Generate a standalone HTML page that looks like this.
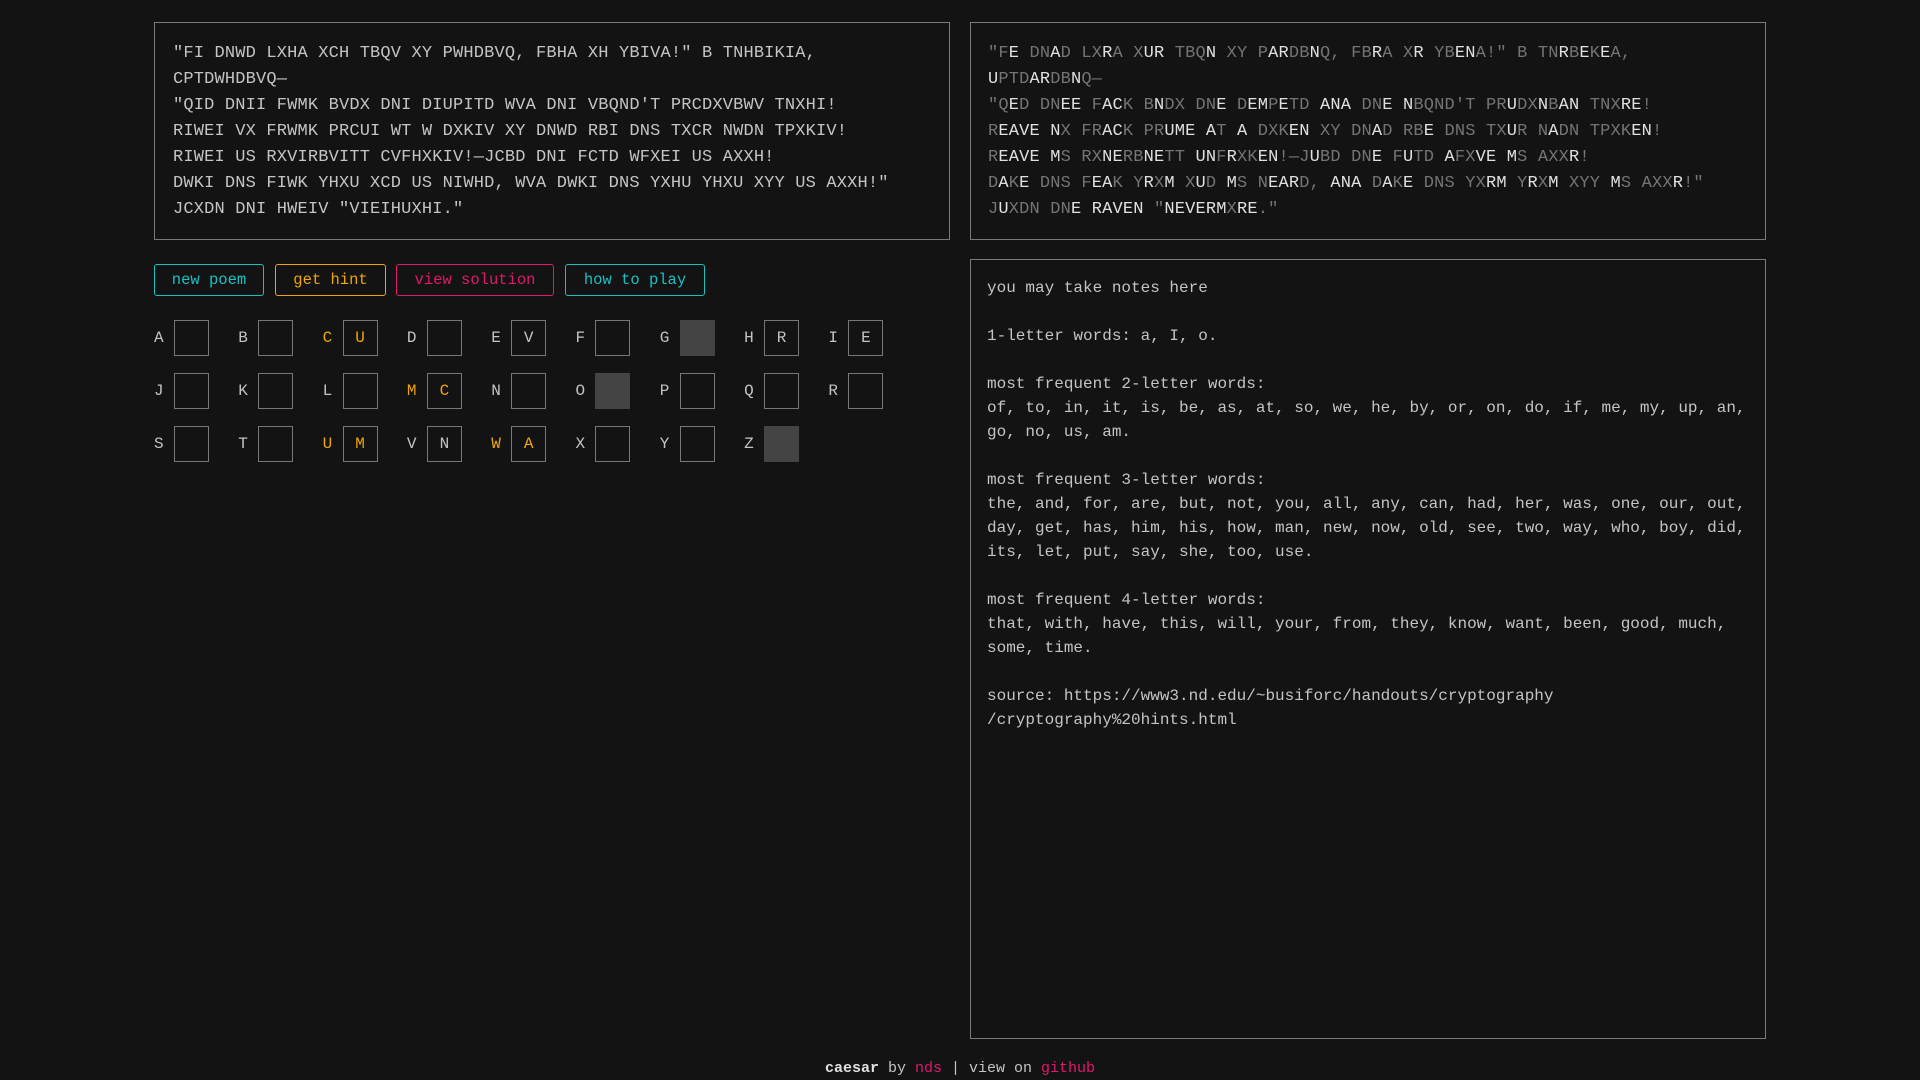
<!DOCTYPE html>
<html><head><meta charset="utf-8">
<style>
*{box-sizing:border-box;margin:0;padding:0}
body{width:1920px;height:1080px;background:#131313;color:#c4c4c4;font-family:"Liberation Mono",monospace;position:relative;overflow:hidden}
.box{position:absolute;border:1px solid #7a7a7a}
.poem{font-size:17px;line-height:26px;padding:18px 18px;white-space:pre;letter-spacing:0.17px}
#left{left:154px;top:22px;width:796px;height:218px}
#right{left:970px;top:22px;width:796px;height:218px;color:#747474;padding-left:17px}
#right b{font-weight:normal;color:#e0e0e0}
#notes{left:970px;top:259px;width:796px;height:780px;font-size:16px;line-height:24px;padding:16px 16px;white-space:pre-wrap;color:#c4c4c4}
.btn{position:absolute;top:264px;height:32px;border:1px solid;border-radius:3px;font-size:15.5px;line-height:30px;text-align:center}
.grid{position:absolute;left:154px;top:320px}
.row{display:flex;height:36px;margin-bottom:17px}
.cell{width:84.3px;display:flex;align-items:center;font-size:16px}
.cell span{width:20px}
.cell i{font-style:normal;width:35px;height:36px;border:1px solid #777;display:flex;align-items:center;justify-content:center}
.cell i.f{background:#444;border-color:#444}
.o{color:#f0a500}
#foot{position:absolute;top:1060px;width:100%;text-align:center;font-size:15px;color:#c4c4c4}
.pk{color:#e0186c}
</style></head><body>
<div class="box poem" id="left">"FI DNWD LXHA XCH TBQV XY PWHDBVQ, FBHA XH YBIVA!" B TNHBIKIA,
CPTDWHDBVQ—
"QID DNII FWMK BVDX DNI DIUPITD WVA DNI VBQND'T PRCDXVBWV TNXHI!
RIWEI VX FRWMK PRCUI WT W DXKIV XY DNWD RBI DNS TXCR NWDN TPXKIV!
RIWEI US RXVIRBVITT CVFHXKIV!—JCBD DNI FCTD WFXEI US AXXH!
DWKI DNS FIWK YHXU XCD US NIWHD, WVA DWKI DNS YXHU YHXU XYY US AXXH!"
JCXDN DNI HWEIV "VIEIHUXHI."</div>
<div class="box poem" id="right">"F<b>E</b> DN<b>A</b>D LX<b>R</b>A X<b>UR</b> TBQ<b>N</b> XY P<b>AR</b>DB<b>N</b>Q, FB<b>R</b>A X<b>R</b> YB<b>EN</b>A!" B TN<b>R</b>B<b>E</b>K<b>E</b>A,
<b>U</b>PTD<b>AR</b>DB<b>N</b>Q—
"Q<b>E</b>D DN<b>EE</b> F<b>AC</b>K B<b>N</b>DX DN<b>E</b> D<b>EM</b>P<b>E</b>TD <b>ANA</b> DN<b>E</b> <b>N</b>BQND'T PR<b>U</b>DX<b>N</b>B<b>AN</b> TNX<b>RE</b>!
R<b>EAVE</b> <b>N</b>X FR<b>AC</b>K PR<b>UME</b> <b>A</b>T <b>A</b> DXK<b>EN</b> XY DN<b>A</b>D RB<b>E</b> DNS TX<b>U</b>R N<b>A</b>DN TPXK<b>EN</b>!
R<b>EAVE</b> <b>M</b>S RX<b>NE</b>RB<b>NE</b>TT <b>UN</b>F<b>R</b>XK<b>EN</b>!—J<b>U</b>BD DN<b>E</b> F<b>U</b>TD <b>A</b>FX<b>VE</b> <b>M</b>S AXX<b>R</b>!
D<b>A</b>K<b>E</b> DNS F<b>EA</b>K Y<b>R</b>X<b>M</b> X<b>U</b>D <b>M</b>S N<b>EAR</b>D, <b>ANA</b> D<b>A</b>K<b>E</b> DNS YX<b>RM</b> Y<b>R</b>X<b>M</b> XYY <b>M</b>S AXX<b>R</b>!"
J<b>U</b>XDN DN<b>E</b> <b>RAVEN</b> "<b>NEVERM</b>X<b>RE</b>."</div>
<div class="btn" style="left:154px;width:110px;color:#18c0c4;border-color:#18c0c4">new poem</div>
<div class="btn" style="left:275px;width:111px;color:#f0a500;border-color:#f0a500">get hint</div>
<div class="btn" style="left:396px;width:158px;color:#e0186c;border-color:#e0186c">view solution</div>
<div class="btn" style="left:565px;width:140px;color:#18c0c4;border-color:#18c0c4">how to play</div>
<div class="grid">
<div class="row">
<div class="cell"><span>A</span><i></i></div>
<div class="cell"><span>B</span><i></i></div>
<div class="cell"><span class="o">C</span><i class="o">U</i></div>
<div class="cell"><span>D</span><i></i></div>
<div class="cell"><span>E</span><i>V</i></div>
<div class="cell"><span>F</span><i></i></div>
<div class="cell"><span>G</span><i class="f"></i></div>
<div class="cell"><span>H</span><i>R</i></div>
<div class="cell"><span>I</span><i>E</i></div>
</div>
<div class="row">
<div class="cell"><span>J</span><i></i></div>
<div class="cell"><span>K</span><i></i></div>
<div class="cell"><span>L</span><i></i></div>
<div class="cell"><span class="o">M</span><i class="o">C</i></div>
<div class="cell"><span>N</span><i></i></div>
<div class="cell"><span>O</span><i class="f"></i></div>
<div class="cell"><span>P</span><i></i></div>
<div class="cell"><span>Q</span><i></i></div>
<div class="cell"><span>R</span><i></i></div>
</div>
<div class="row">
<div class="cell"><span>S</span><i></i></div>
<div class="cell"><span>T</span><i></i></div>
<div class="cell"><span class="o">U</span><i class="o">M</i></div>
<div class="cell"><span>V</span><i>N</i></div>
<div class="cell"><span class="o">W</span><i class="o">A</i></div>
<div class="cell"><span>X</span><i></i></div>
<div class="cell"><span>Y</span><i></i></div>
<div class="cell"><span>Z</span><i class="f"></i></div>
</div>
</div>
<div class="box" id="notes">you may take notes here

1-letter words: a, I, o.

most frequent 2-letter words:
of, to, in, it, is, be, as, at, so, we, he, by, or, on, do, if, me, my, up, an, go, no, us, am.

most frequent 3-letter words:
the, and, for, are, but, not, you, all, any, can, had, her, was, one, our, out, day, get, has, him, his, how, man, new, now, old, see, two, way, who, boy, did, its, let, put, say, she, too, use.

most frequent 4-letter words:
that, with, have, this, will, your, from, they, know, want, been, good, much, some, time.

source: https://www3.nd.edu/~busiforc/handouts/cryptography
/cryptography%20hints.html</div>
<div id="foot"><b style="color:#e0e0e0">caesar</b> by <span class="pk">nds</span> | view on <span class="pk">github</span></div>
</body></html>
